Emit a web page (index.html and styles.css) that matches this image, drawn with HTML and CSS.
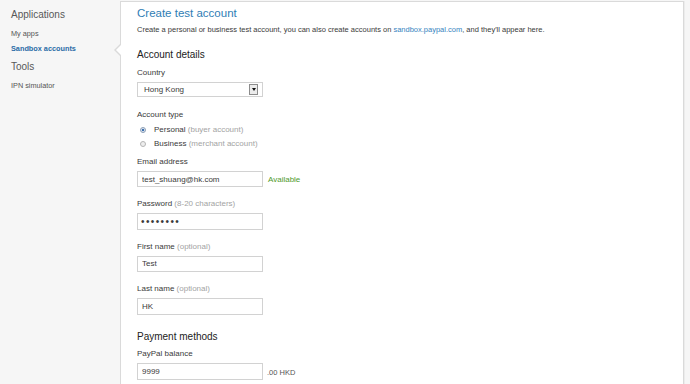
FILE: index.html
```html
<!DOCTYPE html>
<html lang="en">

<head>
 <meta charset="UTF-8">
 <meta name="viewport" content="width=device-width, initial-scale=1.0">
 <title>Sandbox accounts</title>
 <link rel="stylesheet" href="styles.css">
</head>

<body>

 <nav class="sidebar">
  <h3 class="side-title">Applications</h3>
  <a class="side-link first" href="#">My apps</a>
  <a class="side-link active" href="#">Sandbox accounts</a>
  <h3 class="side-title tools">Tools</h3>
  <a class="side-link ipn" href="#">IPN simulator</a>
 </nav>

 <main class="panel">
  <h1 class="title">Create test account</h1>
  <p class="intro">Create a personal or business test account, you can also create accounts on <a href="#">sandbox.paypal.com</a>, and they'll appear here.</p>

  <h2 class="section">Account details</h2>

  <div class="field country">
   <label>Country</label>
   <div class="select">
    <span>Hong Kong</span>
    <span class="select-btn"></span>
   </div>
  </div>

  <div class="field type">
   <label>Account type</label>
   <div class="radios">
    <div class="radio-row"><span class="radio checked"></span>Personal <span class="hint">(buyer account)</span></div>
    <div class="radio-row"><span class="radio"></span>Business <span class="hint">(merchant account)</span></div>
   </div>
  </div>

  <div class="field email">
   <label>Email address</label>
   <div class="row">
    <input type="text" value="test_shuang@hk.com">
    <span class="ok">Available</span>
   </div>
  </div>

  <div class="field">
   <label>Password <span class="hint">(8-20 characters)</span></label>
   <input class="pass" type="password" value="12345678">
  </div>

  <div class="field">
   <label>First name <span class="hint">(optional)</span></label>
   <input type="text" value="Test">
  </div>

  <div class="field">
   <label>Last name <span class="hint">(optional)</span></label>
   <input type="text" value="HK">
  </div>

  <h2 class="section payment">Payment methods</h2>

  <div class="field balance">
   <label>PayPal balance</label>
   <div class="row">
    <input type="text" value="9999">
    <span class="unit">.00 HKD</span>
   </div>
  </div>
 </main>

</body>

</html>
```

FILE: styles.css
```css
:root {
 --main-font: "Liberation Sans", Arial, sans-serif;
 --blue: #2f7db5;
 --link: #3584c0;
 --text: #3a3a3a;
 --hint: #a3a3a3;
 --line: #dadada;
 --input-line: #d2d2d2;
}

html {
 box-sizing: border-box;
 font-family: var(--main-font);
}

*,
*::before,
*::after {
 box-sizing: inherit;
}

body {
 margin: 0;
 display: flex;
 align-items: stretch;
 background-color: #f6f6f6;
 color: var(--text);
 overflow: hidden;
 height: 384px;
}

a {
 text-decoration: none;
}

/* - - - - Sidebar - - - - */
.sidebar {
 width: 120px;
 flex-shrink: 0;
 display: flex;
 flex-direction: column;
 padding-left: 11px;
}

.side-title {
 margin: 8.8px 0 0;
 font-size: 10px;
 line-height: 12px;
 font-weight: normal;
 color: #585858;
}

.side-title.tools {
 margin-top: 6.6px;
}

.side-link {
 font-size: 7.3px;
 line-height: 10px;
 color: #555;
 margin-top: 5px;
}

.side-link.first {
 margin-top: 8.4px;
}

.side-link.ipn {
 margin-top: 8px;
}

.side-link.active {
 color: #2a6ca6;
 font-weight: bold;
}

/* - - - - Panel - - - - */
.panel {
 position: relative;
 flex: 1;
 margin: 1px 6px 0 0;
 padding: 3.5px 16px 0;
 background-color: #fff;
 border: 1px solid var(--line);
 border-bottom: none;
 box-shadow: 1px 0 0 #ececec;
 overflow: hidden;
}

.panel::before,
.panel::after {
 content: "";
 position: absolute;
 top: 42px;
 left: -1px;
 border-style: solid;
 border-width: 6px 6px 6px 0;
 border-color: transparent var(--line) transparent transparent;
}

.sidebar + .panel {
 overflow: visible;
}

.panel::before {
 left: -7px;
}

.panel::after {
 left: -5.5px;
 border-color: transparent #fff transparent transparent;
}

.title {
 margin: 0;
 font-size: 11.5px;
 line-height: 14px;
 font-weight: normal;
 color: var(--blue);
}

.intro {
 margin: 5.9px 0 0;
 font-size: 7.5px;
 line-height: 10px;
}

.intro a {
 color: var(--link);
}

.section {
 margin: 13.6px 0 0;
 font-size: 10px;
 line-height: 12px;
 font-weight: normal;
 color: #222;
}

.section.payment {
 margin-top: 16.5px;
}

.field {
 display: flex;
 flex-direction: column;
 margin-top: 11.9px;
}

.field label {
 font-size: 8px;
 line-height: 10px;
}

.hint {
 color: var(--hint);
}

.field input,
.select {
 width: 126px;
 height: 16.5px;
 margin-top: 4px;
 padding: 0 4px;
 border: 1px solid var(--input-line);
 font-family: var(--main-font);
 font-size: 8px;
 color: var(--text);
 outline: none;
}

.field input.pass {
 font-size: 10px;
 letter-spacing: 1.4px;
 padding-left: 3px;
}

.country {
 margin-top: 7.5px;
}

.select {
 display: flex;
 align-items: center;
 justify-content: space-between;
 height: 15px;
 margin-top: 3.5px;
 padding: 0 4px 0 6px;
}

.select-btn {
 position: relative;
 width: 9px;
 height: 11px;
 border: 1px solid #8c8c8c;
 background-color: #ececec;
}

.select-btn::after {
 content: "";
 position: absolute;
 top: 3.5px;
 left: 1.5px;
 border-style: solid;
 border-width: 3px 2.5px 0;
 border-color: #111 transparent transparent;
}

.type {
 margin-top: 13px;
}

.radios {
 margin-top: 2.6px;
}

.radio-row {
 display: flex;
 align-items: center;
 font-size: 8px;
 line-height: 14.6px;
 padding-left: 3px;
 white-space: pre;
}

.radio {
 width: 6px;
 height: 6px;
 margin-right: 8px;
 border-radius: 50%;
 border: 1px solid #b5b5b5;
 background-color: #eee;
}

.radio.checked {
 border-color: #8a9db5;
 background: radial-gradient(circle, #3a6fb0 0 1.3px, #e4eaf2 1.6px);
}

.email {
 margin-top: 5.2px;
}

.row {
 display: flex;
 align-items: center;
}

.ok {
 margin: 4px 0 0 5px;
 font-size: 8px;
 color: #4e9a2c;
}

.balance {
 margin-top: 6.3px;
}

.balance input {
 height: 17px;
 margin-top: 3.2px;
}

.unit {
 margin: 5px 0 0 4px;
 font-size: 7.5px;
 color: #555;
}
```
